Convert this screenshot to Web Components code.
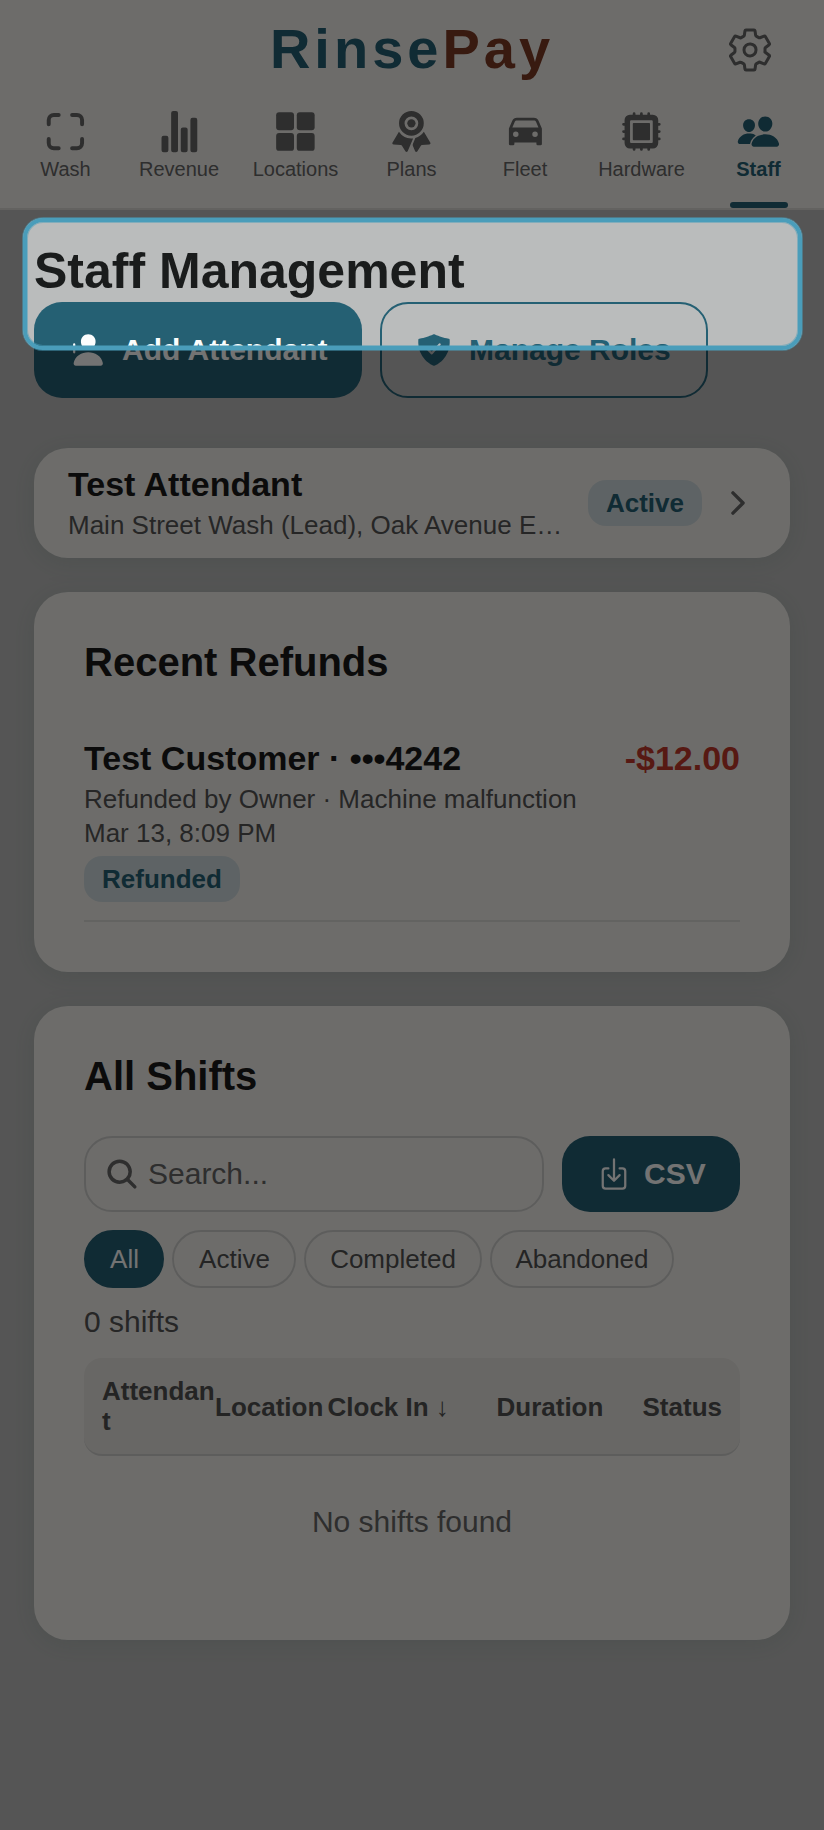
<!DOCTYPE html>
<html lang="en">
<head>
<meta charset="utf-8">
<title>RinsePay</title>
<style>
html,body{margin:0;padding:0}
body{background:#bdbdbd;font-family:"Liberation Sans",Arial,sans-serif;color:#1a1a1a;--primary:#255f73;--surface:#f2f0ec;--muted:#666;--line:#cfcfcd;overflow:hidden}
</style>
</head>
<body>
<staff-page></staff-page>
<script>
const ICONS = {
  scan: '<g fill="none" stroke="currentColor" stroke-width="46" stroke-linecap="round" stroke-linejoin="round"><path d="M178 62h-56a60 60 0 0 0-60 60v48M334 62h56a60 60 0 0 1 60 60v48M178 450h-56a60 60 0 0 1-60-60v-48M334 450h56a60 60 0 0 0 60-60v-48"/></g>',
  stats: '<path d="M104 496H72a24 24 0 01-24-24V328a24 24 0 0124-24h32a24 24 0 0124 24v144a24 24 0 01-24 24zM328 496h-32a24 24 0 01-24-24V232a24 24 0 0124-24h32a24 24 0 0124 24v240a24 24 0 01-24 24zM440 496h-32a24 24 0 01-24-24V120a24 24 0 0124-24h32a24 24 0 0124 24v352a24 24 0 01-24 24zM216 496h-32a24 24 0 01-24-24V40a24 24 0 0124-24h32a24 24 0 0124 24v432a24 24 0 01-24 24z"/>',
  grid: '<rect x="32" y="32" width="208" height="208" rx="34"/><rect x="272" y="32" width="208" height="208" rx="34"/><rect x="32" y="272" width="208" height="208" rx="34"/><rect x="272" y="272" width="208" height="208" rx="34"/>',
  ribbon: '<circle cx="256" cy="160" r="48"/><path fill-rule="evenodd" d="M256 16a144 144 0 1 0 0 288a144 144 0 1 0 0-288zM256 80a80 80 0 1 1 0 160a80 80 0 1 1 0-160z"/><path d="M111 259L35 385Q28 405 48 407L134 412Q142 413 146 420L188 489Q204 502 214 482L276 335A176 176 0 0 1 111 259zM401 259L477 385Q484 405 464 407L378 412Q370 413 366 420L324 489Q308 502 298 482L274 425Q268 410 274 396L302 330A176 176 0 0 0 401 259z"/>',
  car: '<path d="M447.68 220.78a16 16 0 00-1-3.08l-37.78-88.16C400.19 109.17 379 96 354.89 96H157.11c-24.09 0-45.3 13.17-54 33.54L65.29 217.7A15.72 15.72 0 0064 224v176a16 16 0 0016 16h32a16 16 0 0016-16v-16h256v16a16 16 0 0016 16h32a16 16 0 0016-16V224a16.15 16.15 0 00-.32-3.22zM144 320a32 32 0 1132-32 32 32 0 01-32 32zm224 0a32 32 0 1132-32 32 32 0 01-32 32zM104.26 208l28.23-65.85C136.11 133.69 146 128 157.11 128h197.78c11.1 0 21 5.69 24.62 14.15L407.74 208z"/>',
  chip: '<path fill-rule="evenodd" d="M122 60h268a62 62 0 0 1 62 62v268a62 62 0 0 1-62 62H122a62 62 0 0 1-62-62V122a62 62 0 0 1 62-62zM136 124a12 12 0 0 0-12 12v240a12 12 0 0 0 12 12h240a12 12 0 0 0 12-12V136a12 12 0 0 0-12-12z"/><rect x="156" y="156" width="200" height="200" rx="8"/><path fill="none" stroke="currentColor" stroke-width="32" stroke-linecap="round" d="M171 48v20M256 48v20M341 48v20M171 444v20M256 444v20M341 444v20M48 171h20M48 256h20M48 341h20M444 171h20M444 256h20M444 341h20"/>',
  people: '<path d="M336 256c-20.56 0-40.44-9.18-56-25.84-15.13-16.25-24.37-37.92-26-61-1.74-24.62 5.77-47.26 21.14-63.76S312 80 336 80c23.83 0 45.38 9.06 60.7 25.52 15.47 16.62 23 39.22 21.26 63.63-1.67 23.11-10.9 44.77-26 61C376.44 246.82 356.57 256 336 256zM467.83 432H204.18a27.71 27.71 0 01-22-10.67 30.22 30.22 0 01-5.26-25.79c8.42-33.81 29.28-61.85 60.32-81.08C264.79 297.4 299.86 288 336 288c36.85 0 71 9 98.71 26.05 31.11 19.13 52 47.33 60.38 81.55a30.27 30.27 0 01-5.32 25.78A27.68 27.68 0 01467.83 432zM147 260c-35.19 0-66.13-32.72-69-72.93-1.42-20.6 5-39.65 18-53.62 12.86-13.83 31-21.45 51-21.45s38 7.66 50.93 21.57c13.1 14.08 19.5 33.09 18 53.52-2.87 40.2-33.8 72.91-68.93 72.91zM212.66 291.45c-17.59-8.6-40.42-12.9-65.65-12.9-29.46 0-58.07 7.68-80.57 21.62-25.51 15.83-42.67 38.88-49.6 66.71a27.39 27.39 0 004.79 23.36A25.32 25.32 0 0041.72 400h111a8 8 0 007.87-6.57c.11-.63.25-1.26.41-1.88 8.48-34.06 28.35-62.84 57.71-83.82a8 8 0 00-.63-13.39c-1.57-.92-3.37-1.89-5.42-2.89z"/>',
  settings: '<path fill="none" stroke="currentColor" stroke-width="32" stroke-linecap="round" stroke-linejoin="round" d="M262.29 192.31a64 64 0 1057.4 57.4 64.13 64.13 0 00-57.4-57.4zM416.39 256a154.34 154.34 0 01-1.53 20.79l45.21 35.46a10.81 10.81 0 012.45 13.75l-42.77 74a10.81 10.81 0 01-13.14 4.59l-44.9-18.08a16.11 16.11 0 00-15.17 1.75A164.48 164.48 0 01325 400.8a15.94 15.94 0 00-8.82 12.14l-6.73 47.89a11.08 11.08 0 01-10.68 9.17h-85.54a11.11 11.11 0 01-10.69-8.87l-6.72-47.82a16.07 16.07 0 00-9-12.22 155.3 155.3 0 01-21.46-12.57 16 16 0 00-15.11-1.71l-44.89 18.07a10.81 10.81 0 01-13.14-4.58l-42.77-74a10.8 10.8 0 012.45-13.75l38.21-30a16.05 16.05 0 006-14.08c-.36-4.17-.58-8.33-.58-12.5s.21-8.27.58-12.35a16 16 0 00-6.07-13.94l-38.19-30A10.81 10.81 0 0149.48 186l42.77-74a10.81 10.81 0 0113.14-4.59l44.9 18.08a16.11 16.11 0 0015.17-1.75A164.48 164.48 0 01187 111.2a15.94 15.94 0 008.82-12.14l6.73-47.89A11.08 11.08 0 01213.23 42h85.54a11.11 11.11 0 0110.69 8.87l6.72 47.82a16.07 16.07 0 009 12.22 155.3 155.3 0 0121.46 12.57 16 16 0 0015.11 1.71l44.89-18.07a10.81 10.81 0 0113.14 4.58l42.77 74a10.8 10.8 0 01-2.45 13.75l-38.21 30a16.05 16.05 0 00-6.05 14.08c.33 4.14.55 8.3.55 12.47z"/>',
  personAdd: '<path d="M288 256c52.79 0 99.43-49.71 104-110.82 2.27-30.7-7.36-59.33-27.12-80.6C345.33 43.57 318 32 288 32c-30.24 0-57.59 11.5-77 32.38-19.63 21.11-29.2 49.8-27 80.78C188.49 206.28 235.12 256 288 256z"/><path d="M495.38 439.76c-8.44-46.82-34.79-86.15-76.19-113.75C382.42 301.5 335.83 288 288 288s-94.42 13.5-131.19 38c-41.4 27.6-67.75 66.93-76.19 113.75-1.93 10.73.69 21.34 7.19 29.11A30.94 30.94 0 00112 480h352a30.94 30.94 0 0024.21-11.13c6.48-7.77 9.1-18.38 7.17-29.11zM104 288v-40h40a16 16 0 000-32h-40v-40a16 16 0 00-32 0v40H32a16 16 0 000 32h40v40a16 16 0 0032 0z"/>',
  shield: '<path d="M479.07 111.36a16 16 0 00-13.15-14.74c-86.5-15.52-122.61-26.74-203.33-63.2a16 16 0 00-13.18 0C168.69 69.88 132.58 81.1 46.08 96.62a16 16 0 00-13.15 14.74c-3.85 61.11 4.36 118.05 24.43 169.24A349.47 349.47 0 00129 393.11c53.47 56.73 110.24 81.37 121.07 85.73a16 16 0 0012 0c10.83-4.36 67.6-29 121.07-85.73a349.47 349.47 0 0071.5-112.51c20.07-51.19 28.28-108.13 24.43-169.24zm-131 75.11l-110.8 128a16 16 0 01-11.41 5.53h-.66a16 16 0 01-11.2-4.57l-49.2-48.2a16 16 0 0122.4-22.86l37 36.29 99.7-115.13a16 16 0 0124.2 20.94z"/>',
  chevron: '<path fill="none" stroke="currentColor" stroke-width="48" stroke-linecap="round" stroke-linejoin="round" d="M184 112l144 144-144 144"/>',
  search: '<path d="M456.69 421.39L362.6 327.3a173.81 173.81 0 0034.84-104.58C397.44 126.38 319.06 48 222.72 48S48 126.38 48 222.72s78.38 174.72 174.72 174.72A173.81 173.81 0 00327.3 362.6l94.09 94.09a25 25 0 0035.3-35.3zM97.92 222.72a124.8 124.8 0 11124.8 124.8 124.95 124.95 0 01-124.8-124.8z"/>',
  download: '<path fill="none" stroke="currentColor" stroke-width="32" stroke-linecap="round" stroke-linejoin="round" d="M336 176h40a40 40 0 0140 40v208a40 40 0 01-40 40H136a40 40 0 01-40-40V216a40 40 0 0140-40h40M176 272l80 80 80-80M256 48v288"/>'
};

function define(name, html) {
  customElements.define(name, class extends HTMLElement {
    constructor() {
      super();
      const t = document.createElement('template');
      t.innerHTML = typeof html === 'function' ? html(this) : html;
      this.attachShadow({ mode: 'open' }).append(t.content.cloneNode(true));
    }
  });
}

define('ui-icon', el => `<style>:host{display:block;flex:none;width:var(--size,36px);height:var(--size,36px)}svg{display:block;width:100%;height:100%}</style>
<svg viewBox="0 0 512 512" fill="currentColor" aria-hidden="true">${ICONS[el.getAttribute('name')]}</svg>`);

define('nav-tab', el => `<style>
:host{--size:44px;position:relative;display:flex;flex-direction:column;align-items:center;gap:4px;padding-top:9px;color:var(--muted);font-size:20px;line-height:24px}
:host([active]){color:var(--primary);font-weight:700}
:host([active])::after{content:"";position:absolute;bottom:0;left:30px;width:58px;height:6px;border-radius:3px;background:var(--primary)}
ui-icon{margin-right:1px;transform:translate(.4px,.6px)}
</style><ui-icon name="${el.getAttribute('icon')}"></ui-icon><span><slot></slot></span>`);

define('app-header', `<style>
:host{display:block;height:208px;background:var(--surface);border-bottom:2px solid #dcdad6}
.top{display:grid;grid-template-columns:1fr auto 1fr;align-items:center;height:100px}
h1{margin:0;padding-bottom:2px;font-size:56px;line-height:64px;letter-spacing:4px;color:var(--primary)}
h1 span{color:#7c3a24}
.gear{grid-column:3;justify-self:end;margin-right:50px;--size:48px;color:var(--muted)}
nav{display:grid;grid-template-columns:115px 112px 121px 111px 116px 117px 117px;padding-left:8px;height:108px}
</style>
<div class="top"><i></i><h1>Rinse<span>Pay</span></h1><ui-icon class="gear" name="settings"></ui-icon></div>
<nav><nav-tab icon="scan">Wash</nav-tab><nav-tab icon="stats">Revenue</nav-tab><nav-tab icon="grid">Locations</nav-tab><nav-tab icon="ribbon">Plans</nav-tab><nav-tab icon="car">Fleet</nav-tab><nav-tab icon="chip">Hardware</nav-tab><nav-tab icon="people" active>Staff</nav-tab></nav>`);

define('ui-button', el => `<style>
:host{display:block}
button{all:unset;box-sizing:border-box;display:flex;align-items:center;gap:18px;width:100%;height:96px;padding:0 34px;border-radius:28px;background:var(--primary);color:#fff;font-size:30px;line-height:36px;font-weight:700;white-space:nowrap}
:host([outline]) button{gap:17px;background:none;border:2px solid var(--primary);color:var(--primary)}
:host([compact]) button{height:76px;gap:12px}
</style><button><ui-icon name="${el.getAttribute('icon')}"></ui-icon><slot></slot></button>`);

define('ui-card', `<style>:host{display:block;box-sizing:border-box;background:var(--surface);border-radius:34px;padding:50px;box-shadow:0 4px 24px rgba(60,120,95,.13)}</style><slot></slot>`);

define('ui-badge', `<style>:host{display:block;flex:none;width:fit-content;padding:6px 18px;border-radius:18px;background:#d1dcdf;color:var(--primary);font-size:26px;line-height:34px;font-weight:700}</style><slot></slot>`);

define('attendant-row', `<style>
:host{display:block}
ui-card{display:flex;align-items:center;gap:18px;height:110px;padding:0 34px}
.info{flex:1;min-width:0}
.name{font-size:34px;line-height:40px;font-weight:700}
.sites{margin-top:4px;font-size:26px;line-height:34px;color:#555;white-space:nowrap}
ui-icon{color:var(--muted)}
</style><ui-card><div class="info"><div class="name">Test Attendant</div><div class="sites">Main Street Wash (Lead), Oak Avenue E…</div></div><ui-badge>Active</ui-badge><ui-icon name="chevron"></ui-icon></ui-card>`);

define('refunds-card', `<style>
:host{display:block}
h2{margin:0 0 56px;font-size:40px;line-height:40px}
.row{display:flex;justify-content:space-between;font-size:34px;line-height:40px;font-weight:700}
.amount{color:#c0392b}
.meta{font-size:26px;line-height:34px;color:#555}
.row + .meta{margin-top:4px}
ui-badge{margin-top:6px}
.item{padding-bottom:18px;border-bottom:2px solid #dcdbd7}
</style><ui-card><h2>Recent Refunds</h2><div class="item"><div class="row"><span>Test Customer · •••4242</span><span class="amount">-$12.00</span></div><div class="meta">Refunded by Owner · Machine malfunction</div><div class="meta">Mar 13, 8:09 PM</div><ui-badge>Refunded</ui-badge></div></ui-card>`);

define('filter-chip', `<style>
:host{display:flex;align-items:center;justify-content:center;box-sizing:border-box;height:58px;border:2px solid var(--line);border-radius:29px;font-size:26px;line-height:34px;color:#505050}
:host([selected]){background:var(--primary);border-color:var(--primary);color:#fff}
</style><slot></slot>`);

define('shifts-card', `<style>
:host{display:block}
ui-card{height:634px}
h2{margin:0 0 40px;font-size:40px;line-height:40px}
.tools{display:flex;gap:18px}
.search{flex:1;display:flex;align-items:center;gap:8px;box-sizing:border-box;height:76px;padding:0 18px;border:2px solid var(--line);border-radius:28px;color:var(--muted);font-size:30px;line-height:36px}
ui-button{width:178px}
.chips{display:grid;grid-template-columns:80px 124px 178px 184px;gap:8px;margin-top:18px}
.chips filter-chip:nth-child(-n+2){padding-left:1px}
.count{margin-top:16px;font-size:30px;line-height:36px;color:#555}
.head{display:grid;grid-template-columns:113px 112.5px 169px 1fr auto;align-items:center;box-sizing:border-box;height:98px;margin-top:18px;padding:0 18px;border-bottom:2px solid var(--line);border-radius:18px;background:#e6e4df;color:#505050;font-size:26px;line-height:30px;font-weight:700}
.head span{overflow-wrap:anywhere}
.head span + span{padding-top:2px}
.empty{margin-top:48px;text-align:center;font-size:30px;line-height:36px;color:var(--muted)}
</style><ui-card><h2>All Shifts</h2>
<div class="tools"><div class="search"><ui-icon name="search"></ui-icon><span>Search...</span></div><ui-button compact icon="download">CSV</ui-button></div>
<div class="chips"><filter-chip selected>All</filter-chip><filter-chip>Active</filter-chip><filter-chip>Completed</filter-chip><filter-chip>Abandoned</filter-chip></div>
<div class="count">0 shifts</div>
<div class="head"><span>Attendant</span><span>Location</span><span>Clock In ↓</span><span>Duration</span><span>Status</span></div>
<div class="empty">No shifts found</div></ui-card>`);

/* Tour highlight: a ring whose spread shadow dims everything outside it. */
define('tour-spotlight', `<style>
:host{position:absolute;left:23px;top:218px;width:779px;height:132px;box-sizing:border-box;border:4px solid #4a9dba;border-radius:20px;background:rgba(74,157,150,.02);box-shadow:inset 0 0 0 1px rgba(74,157,186,.5),0 0 0 1px rgba(74,157,186,.5),0 0 0 2000px rgba(0,0,0,.55);pointer-events:none}
</style>`);

define('staff-page', `<style>
:host{display:block;position:relative;height:1830px;overflow:hidden}
main{padding:32px 34px 0}
h1{margin:0 0 2px;font-size:50px;line-height:58px}
.actions{display:flex;gap:18px;margin-bottom:50px}
.actions ui-button{width:328px}
.stack{display:grid;grid-template-columns:minmax(0,1fr);gap:34px}
</style>
<app-header></app-header>
<main><h1>Staff Management</h1>
<div class="actions"><ui-button icon="personAdd">Add Attendant</ui-button><ui-button outline icon="shield">Manage Roles</ui-button></div>
<div class="stack"><attendant-row></attendant-row><refunds-card></refunds-card><shifts-card></shifts-card></div></main>
<tour-spotlight></tour-spotlight>`);
</script>
</body>
</html>
